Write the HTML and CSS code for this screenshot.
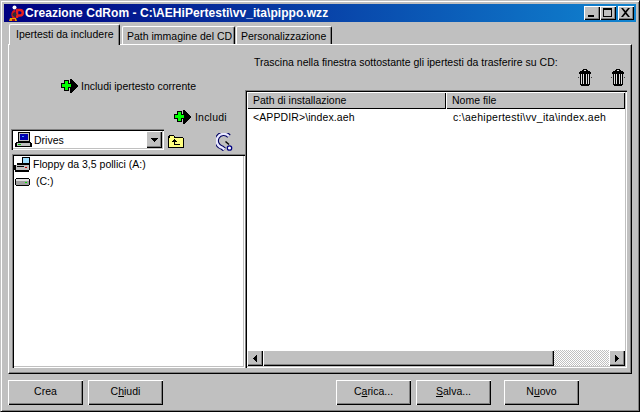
FILE: index.html
```html
<!DOCTYPE html>
<html lang="it">
<head>
<meta charset="utf-8">
<title>Creazione CdRom</title>
<link rel="stylesheet" href="styles.css">
</head>
<body>
<svg class="defs" width="0" height="0">
  <defs>
    <g id="plus" shape-rendering="crispEdges">
      <path d="M9 1h2v1h1v1h1v1h1v1h1v1h1v1h1v2h-1v1h-1v1h-1v1h-1v1h-1v1h-1v1h-2z" fill="#000"/>
      <path d="M3 2h5v3h3v5h-3v3h-5v-3h-3v-5h3z" fill="#000"/>
      <path d="M4 3h3v3h3v3h-3v3h-3v-3h-3v-3h3z" fill="#00ff00"/>
    </g>
    <g id="trash" shape-rendering="crispEdges">
      <path d="M5 0h4v1h1v1h2v1h1v2h-1v11h-1v1h-8v-1h-1v-11h-1v-2h1v-1h2v-1h1z" fill="#000"/>
      <path d="M6 1h2v1h-2zM3 5h1v10h-1zM5 5h1v10h-1zM8 5h1v10h-1zM10 5h1v10h-1z" fill="#e0e0e0"/>
      <path d="M0 8h1v1h-1zM13 8h1v1h-1z" fill="#404040"/>
    </g>
  </defs>
</svg>
<div class="window">
  <header class="titlebar">
    <svg class="app-icon" width="17" height="17" viewBox="0 0 17 17">
      <circle cx="7.500" cy="2.500" r="2" fill="#fff"/>
      <path d="M8 5.500A4.500 4.500 0 0 0 8 13.500" fill="none" stroke="#d01818" stroke-width="2.500"/>
      <path d="M10 13V5h3a2.500 2.500 0 0 1 0 5.500h-3" fill="none" stroke="#e82020" stroke-width="2.500"/>
      <circle cx="7.500" cy="9.500" r="2" fill="#303030"/>
      <path d="M3 13h6l1 3h-8z" fill="#e8a000"/>
      <path d="M5 14h3v2h-3z" fill="#b01010"/>
    </svg>
    <span class="title-text">Creazione CdRom - C:\AEHiPertesti\vv_ita\pippo.wzz</span>
    <div class="caption-buttons">
      <span class="cap-btn"><svg width="10" height="10" viewBox="0 0 10 10" shape-rendering="crispEdges"><path d="M1 7h6v2h-6z"/></svg></span>
      <span class="cap-btn"><svg width="10" height="10" viewBox="0 0 10 10" shape-rendering="crispEdges"><path d="M0 0h9v9h-9zM1 2v6h7v-6z" fill-rule="evenodd"/></svg></span>
      <span class="cap-btn cap-close"><svg width="10" height="10" viewBox="0 0 10 10"><path d="M0 0h2l2.500 3 2.500-3h2l-3.500 4.500 3.500 4.500h-2l-2.500-3-2.500 3h-2l3.500-4.500z"/></svg></span>
    </div>
  </header>

  <nav class="tabs">
    <span class="tab tab-active">Ipertesti da includere</span>
    <span class="tab tab-path">Path immagine del CD</span>
    <span class="tab tab-custom">Personalizzazione</span>
  </nav>

  <main class="panel">
    <section class="left">
      <div class="include-current">
        <svg class="plus" width="18" height="16" viewBox="0 0 18 16"><use href="#plus"/></svg>
        <span>Includi ipertesto corrente</span>
      </div>
      <div class="include">
        <svg class="plus" width="18" height="16" viewBox="0 0 18 16"><use href="#plus"/></svg>
        <span class="include-label">Includi</span>
      </div>
      <div class="drive-row">
        <div class="combo">
          <svg class="combo-icon" width="17" height="16" viewBox="0 0 17 16" shape-rendering="crispEdges">
            <path d="M3 0h12v10h-12z" fill="#000"/>
            <path d="M4 1h10v8h-10z" fill="#c0c0c0"/>
            <path d="M5 2h8v6h-8z" fill="#0000b0"/>
            <path d="M7 4h2v1h-2z" fill="#40a0ff"/>
            <path d="M1 10h15v1h1v4h-17v-4h1z" fill="#000"/>
            <path d="M2 11h13v3h-13z" fill="#c0c0c0"/>
            <path d="M3 12h3v1h-3z" fill="#00c000"/>
          </svg>
          <span class="combo-text">Drives</span>
          <span class="combo-btn"><svg width="7" height="4" viewBox="0 0 7 4" shape-rendering="crispEdges"><path d="M0 0h7v1h-1v1h-1v1h-1v1h-1v-1h-1v-1h-1v-1h-1z"/></svg></span>
        </div>
        <svg class="folder-up" width="16" height="14" viewBox="0 0 16 14" shape-rendering="crispEdges">
          <path d="M1 1h5v1h1v1h8v1h1v10h-16v-12z" fill="#000"/>
          <path d="M1 4h14v9h-14z" fill="#ffff80"/>
          <path d="M2 2h4v2h-4z" fill="#ffff80"/>
          <path d="M6 5h1v1h1v1h1v1h-2v2h5v1h-6v-3h-2v-1h1v-1h1z" fill="#000"/>
        </svg>
        <svg class="magnet" width="18" height="18" viewBox="0 0 18 18" fill="none">
          <path d="M13 3.200A7 7 0 1 0 6 14.600L8.500 16.500" stroke="#000060" stroke-width="4.500"/>
          <path d="M13 3.200A7 7 0 1 0 6 14.600L8.500 16.500" stroke="#e8e8ff" stroke-width="2.300"/>
          <path d="M9.500 8.500L13 11.500" stroke="#000" stroke-width="1.500"/>
          <circle cx="13.500" cy="15" r="2.200" fill="#fff" stroke="#000080" stroke-width="1.300"/>
        </svg>
      </div>
      <ul class="tree sunken">
        <li class="tree-item">
          <svg width="17" height="16" viewBox="0 0 17 16" shape-rendering="crispEdges">
            <path d="M8 0h8v9h-8z" fill="#000"/>
            <path d="M9 1h6v7h-6z" fill="#a0e0ff"/>
            <path d="M3 6h12v1h1v6h-1v2h-14v-2h-1v-5h3z" fill="#000"/>
            <path d="M2 8h13v5h-13z" fill="#c0c0c0"/>
            <path d="M3 9h7v1h-7z" fill="#000"/>
            <path d="M11 10h2v1h-2z" fill="#c00000"/>
          </svg>
          <span>Floppy da 3,5 pollici (A:)</span>
        </li>
        <li class="tree-item">
          <svg width="17" height="16" viewBox="0 0 17 16" shape-rendering="crispEdges">
            <path d="M2 4h13v1h1v6h-1v1h-13v-1h-1v-6h1z" fill="#000"/>
            <path d="M2 5h13v2h-13z" fill="#e0e0e0"/>
            <path d="M2 7h13v4h-13z" fill="#a0a0a0"/>
            <path d="M11 8h2v1h-2z" fill="#00e000"/>
          </svg>
          <span class="drive-c">(C:)</span>
        </li>
      </ul>
    </section>

    <section class="right">
      <p class="hint">Trascina nella finestra sottostante gli ipertesti da trasferire su CD:</p>
      <div class="trash-row">
        <svg width="14" height="17" viewBox="0 0 14 17"><use href="#trash"/></svg>
        <svg width="14" height="17" viewBox="0 0 14 17"><use href="#trash"/></svg>
      </div>
      <div class="list sunken">
        <div class="list-head">
          <span class="col-head col-path">Path di installazione</span>
          <span class="col-head col-file">Nome file</span>
        </div>
        <div class="list-body">
          <div class="list-row">
            <span class="cell-path">&lt;APPDIR&gt;\index.aeh</span>
            <span class="cell-file">c:\aehipertesti\vv_ita\index.aeh</span>
          </div>
        </div>
        <div class="scrollbar">
          <span class="sb-btn"><svg width="4" height="7" viewBox="0 0 4 7" shape-rendering="crispEdges"><path d="M3 0h1v7h-1v-1h-1v-1h-1v-1h-1v-1h1v-1h1v-1h1z"/></svg></span>
          <span class="sb-thumb"></span>
          <span class="sb-track"></span>
          <span class="sb-btn"><svg width="4" height="7" viewBox="0 0 4 7" shape-rendering="crispEdges"><path d="M0 0h1v1h1v1h1v1h1v1h-1v1h-1v1h-1v1h-1z"/></svg></span>
        </div>
      </div>
    </section>
  </main>

  <footer class="actions">
    <button class="btn">Crea</button>
    <button class="btn">C<u>h</u>iudi</button>
    <button class="btn btn-load">C<u>a</u>rica...</button>
    <button class="btn"><u>S</u>alva...</button>
    <button class="btn btn-new">N<u>u</u>ovo</button>
  </footer>
</div>
</body>
</html>
```
FILE: styles.css
```css
* { box-sizing: border-box; }
html, body { margin: 0; padding: 0; }
body {
  width: 640px;
  height: 412px;
  overflow: hidden;
  background: #c0c0c0;
  color: #000;
  font-family: "Liberation Sans", Arial, sans-serif;
  font-size: 10.5px;
  line-height: 13px;
}
.defs { position: absolute; }
svg { display: block; flex: none; }

.window {
  width: 640px;
  height: 412px;
  display: flex;
  flex-direction: column;
  padding: 3px;
  border: 1px solid;
  border-color: #c0c0c0 #000 #000 #c0c0c0;
  box-shadow: inset 1px 1px 0 #fff, inset -1px -1px 0 #808080;
}

.titlebar {
  height: 18px;
  flex: none;
  display: flex;
  align-items: center;
  padding: 0 2px 0 3px;
  background: linear-gradient(90deg, #000080, #1084d0);
  color: #fff;
}
.app-icon { margin-right: 1px; }
.title-text {
  flex: 1;
  font-weight: bold;
  font-size: 12px;
  letter-spacing: 0.05px;
  white-space: nowrap;
}
.caption-buttons { display: flex; }
.cap-btn {
  width: 16px;
  height: 14px;
  display: flex;
  align-items: center;
  justify-content: center;
  background: #c0c0c0;
  color: #000;
  box-shadow: inset 1px 1px 0 #fff, inset -1px -1px 0 #000, inset -2px -2px 0 #808080;
}
.cap-close { margin-left: 2px; }

.tabs {
  height: 22px;
  flex: none;
  display: flex;
  align-items: flex-end;
  padding: 2px 0 0 5px;
  position: relative;
  z-index: 1;
}
.tab {
  height: 18px;
  padding: 3px 0 0 4px;
  border: 1px solid #fff;
  border-right-color: #000;
  border-bottom: 0;
  border-radius: 2px 2px 0 0;
  white-space: nowrap;
  box-shadow: inset -1px 0 0 #808080;
  margin-right: 1px;
}
.tab-active {
  width: 111px;
  height: 21px;
  margin-bottom: -1px;
  margin-right: 2px;
  padding: 3px 0 0 6px;
  background: #c0c0c0;
}
.tab-path { width: 113px; }
.tab-custom { width: 96px; }

.panel {
  width: 624px;
  height: 330px;
  margin-left: 4px;
  flex: none;
  display: grid;
  grid-template-columns: 234px 384px;
  padding: 0 2px;
  border: 1px solid;
  border-color: #fff #000 #000 #fff;
  box-shadow: inset -1px -1px 0 #808080;
}

.left { display: flex; flex-direction: column; min-width: 0; padding-top: 33px; }
.include-current {
  height: 16px;
  display: flex;
  align-items: center;
  gap: 2px;
  padding-left: 50px;
}
.include {
  height: 16px;
  margin-top: 15px;
  display: flex;
  align-items: center;
  gap: 2px;
  padding-left: 163px;
}
.include-label { letter-spacing: 0.2px; margin-left: 1px; }
.drive-row {
  height: 22px;
  margin-top: 4px;
  display: flex;
  align-items: flex-start;
}
.combo {
  width: 153px;
  height: 21px;
  display: flex;
  align-items: center;
  padding: 0 2px 0 4px;
  background: #fff;
  box-shadow: inset 1px 1px 0 #808080, inset 2px 2px 0 #000, inset -1px -1px 0 #fff, inset -2px -2px 0 #c0c0c0;
}
.combo-text { flex: 1; margin-left: 2px; padding-top: 2px; }
.combo-btn {
  width: 16px;
  height: 17px;
  display: flex;
  align-items: center;
  justify-content: center;
  background: #c0c0c0;
  box-shadow: inset 1px 1px 0 #fff, inset -1px -1px 0 #000, inset -2px -2px 0 #808080;
}
.folder-up { margin: 5px 0 0 4px; }
.magnet { margin: 4px 0 0 32px; }

.sunken {
  background: #fff;
  box-shadow: inset 1px 1px 0 #808080, inset 2px 2px 0 #000, inset -1px -1px 0 #fff, inset -2px -2px 0 #c0c0c0;
}
.tree {
  list-style: none;
  margin: 3px 0 0 1px;
  padding: 2px;
  width: 233px;
  height: 214px;
}
.tree-item { height: 17px; display: flex; align-items: center; gap: 2px; }
.tree-item span { margin-top: -1px; }
.tree-item span.drive-c { margin-left: 3px; }

.right { display: flex; flex-direction: column; min-width: 0; }
.hint { margin: 11px 0 0 9px; height: 13px; white-space: nowrap; }
.trash-row {
  height: 20px;
  display: flex;
  justify-content: flex-end;
  gap: 19px;
  padding-right: 4px;
}
.list {
  width: 382px;
  height: 278px;
  margin-top: 1px;
  padding: 2px;
  display: flex;
  flex-direction: column;
}
.list-head { height: 17px; display: flex; flex: none; }
.col-head {
  display: flex;
  align-items: center;
  padding-left: 6px;
  background: #c0c0c0;
  box-shadow: inset 1px 1px 0 #fff, inset -1px -1px 0 #000;
}
.col-path { width: 199px; }
.col-file { flex: 1; }
.list-body { flex: 1; padding-top: 1px; }
.list-row { display: flex; height: 14px; align-items: center; padding-left: 6px; white-space: nowrap; }
.cell-path { width: 200px; letter-spacing: 0.1px; }
.cell-file { letter-spacing: 0.28px; }

.scrollbar { height: 16px; display: flex; flex: none; background: #c0c0c0; }
.sb-btn {
  width: 16px;
  display: flex;
  align-items: center;
  justify-content: center;
  background: #c0c0c0;
  box-shadow: inset 1px 1px 0 #fff, inset -1px -1px 0 #000, inset -2px -2px 0 #808080;
}
.sb-thumb {
  width: 291px;
  background: #c0c0c0;
  box-shadow: inset 1px 1px 0 #fff, inset -1px -1px 0 #000, inset -2px -2px 0 #808080;
}
.sb-track {
  flex: 1;
  background: conic-gradient(#fff 25%, #c0c0c0 0 50%, #fff 0 75%, #c0c0c0 0) 0 0 / 2px 2px;
}

.actions {
  flex: none;
  display: flex;
  padding: 6px 0 0 4px;
  gap: 5px;
}
.btn {
  width: 75px;
  height: 25px;
  padding: 0 0 2px;
  border: 0;
  font: inherit;
  color: #000;
  background: #c0c0c0;
  box-shadow: inset 1px 1px 0 #fff, inset -1px -1px 0 #000, inset -2px -2px 0 #808080;
}
.btn-load { margin-left: 168px; }
.btn-new { margin-left: 8px; }
```
